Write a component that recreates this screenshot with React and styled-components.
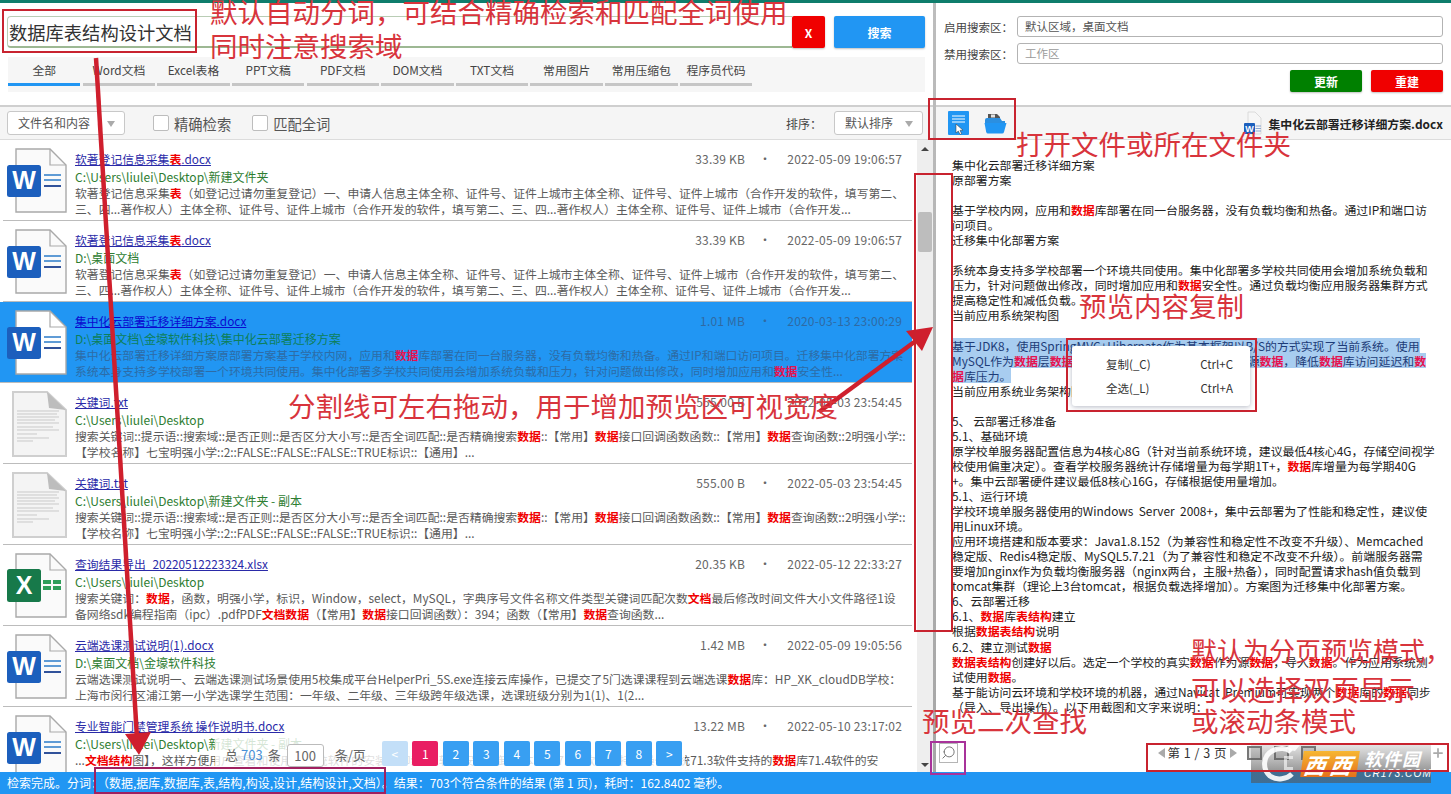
import React from 'react';
import styled, { createGlobalStyle } from 'styled-components';
import { Search, Plus } from 'lucide-react';

const UI = '"Noto Sans CJK SC", "Noto Sans", sans-serif';

const Global = createGlobalStyle`
  html, body { margin: 0; padding: 0; height: 100%; overflow: hidden; background: #fff; }
  body { font-family: ${UI}; font-size: 12px; color: #333; }
  * { box-sizing: border-box; }
`;

const Page = styled.div`
  position: relative;
  display: flex;
  flex-direction: column;
  width: 1451px;
  height: 794px;
  overflow: hidden;
`;
const TopBar = styled.div`height: 3px; background: #0f7d6c; flex: none;`;
const Main = styled.div`flex: 1; display: flex; min-height: 0;`;
const LeftPane = styled.section`width: 933px; flex: none; display: flex; flex-direction: column; min-height: 0;`;
const Divider = styled.div`width: 3px; flex: none; background: linear-gradient(#bdbdbd, #a6a6a6);`;
const RightPane = styled.section`flex: 1; display: flex; flex-direction: column; min-width: 0; min-height: 0;`;

const Header = styled.header`height: 102px; flex: none; padding: 13px 8px 0 7px;`;
const SearchRow = styled.div`display: flex; height: 32px;`;
const SearchField = styled.div`
  width: 785px;
  height: 32px;
  border: 1px solid #b9cdb5;
  border-bottom: 2px solid #9db893;
  border-right: none;
  border-radius: 4px 0 0 4px;
  font-size: 18.3px;
  line-height: 30px;
  padding-left: 1px;
  color: #333;
  white-space: nowrap;
`;
const ActionButton = styled.button`
  border: none;
  height: 32px;
  border-radius: 2px;
  color: #fff;
  font: 700 12px ${UI};
  padding: 0;
  box-shadow: 0 1px 2px rgba(0,0,0,.25);
  background: ${p => p.$bg};
  width: ${p => p.$w}px;
  margin-left: ${p => p.$ml}px;
`;
const Tabs = styled.nav`
  margin: 9px 0 0 1px;
  width: 917px;
  height: 35px;
  background: #f6f6f6;
  display: grid;
  grid-template-columns: repeat(10, 72.4px);
  column-gap: 2.25px;
`;
const Tab = styled.div`
  height: 29px;
  padding-top: 4px;
  text-align: center;
  font-size: 11.8px;
  line-height: 18px;
  color: #444;
  white-space: nowrap;
  border-bottom: 3px solid ${p => (p.$active ? '#2196f3' : '#c6c6c6')};
`;

const Toolbar = styled.div`
  height: 35px;
  flex: none;
  background: #f5f5f5;
  border-top: 2px solid #cfcfcf;
  border-bottom: 1px solid #dcdcdc;
  display: flex;
  align-items: center;
`;
const LeftToolbar = styled(Toolbar)`padding: 0 10px 0 7px;`;
const Picker = styled.div`
  position: relative;
  height: 24px;
  width: ${p => p.$w}px;
  background: #fff;
  border: 1px solid #c8c8c8;
  border-radius: 3px;
  padding-left: ${p => p.$pad}px;
  font-size: 12px;
  line-height: 22px;
  color: #555;
  &::after {
    content: '';
    position: absolute;
    right: 9px;
    top: 9px;
    border: 4px solid transparent;
    border-top: 6px solid #aaa;
    border-bottom: none;
  }
`;
const Check = styled.label`
  display: flex;
  align-items: center;
  gap: 5px;
  font-size: 14.3px;
  color: #555;
  margin-left: ${p => p.$ml}px;
`;
const CheckBox = styled.span`
  width: 16px;
  height: 16px;
  background: #fff;
  border: 1px solid #bdbdbd;
  border-radius: 2px;
`;
const SortLabel = styled.span`margin-left: auto; font-size: 12px; color: #444; margin-right: 12px;`;

const ListWrap = styled.div`flex: 1; position: relative; min-height: 0; display: flex; overflow: hidden;`;
const List = styled.div`width: 917px; flex: none; padding-right: 2px;`;
const Row = styled.article`
  height: 81px;
  display: flex;
  padding: 8px 10px 0 ${p => (p.$selected ? 7 : 4)}px;
  background: ${p => (p.$selected ? '#2196f3' : 'transparent')};
  border-bottom: 1px solid #bcbcbc;
  margin-left: ${p => (p.$selected ? 0 : 3)}px;
  margin-right: 3px;
`;
const FileIcon = styled.svg`width: 60px; height: 66px; flex: none; display: block;`;
const RowBody = styled.div`margin-left: 8px; padding-top: 2px; flex: 1; min-width: 0;`;
const RowHead = styled.div`display: flex; justify-content: space-between; height: 18px; line-height: 18px;`;
const RowTitle = styled.a`
  font-size: 11.8px;
  color: ${p => (p.$selected ? '#0a0ad0' : '#2a2aa8')};
  text-decoration: underline;
  white-space: nowrap;
`;
const Meta = styled.div`
  display: flex;
  gap: 14px;
  font-size: 12px;
  letter-spacing: .2px;
  color: ${p => (p.$selected ? '#2f6aa3' : '#666')};
  white-space: nowrap;
`;
const MetaDot = styled.span`margin-right: 2px;`;
const RowPath = styled.div`
  height: 17px;
  line-height: 17px;
  font-size: 12px;
  white-space: nowrap;
  color: ${p => (p.$selected ? '#0d7f5a' : '#2e7d32')};
`;
const Snippet = styled.div`
  height: 16px;
  line-height: 16px;
  font-size: 11.85px;
  white-space: nowrap;
  color: ${p => (p.$selected ? '#2d6ca6' : '#5a5a5a')};
`;
const Hl = styled.b`color: ${p => (p.$pink ? '#e6124f' : '#f00000')}; font-weight: 700;`;

const ScrollTrack = styled.div`
  position: relative;
  width: 16px;
  flex: none;
  background: #eeeeee;
`;
const ScrollThumb = styled.div`
  position: absolute;
  left: 1px;
  top: 72px;
  width: 14px;
  height: 40px;
  background: #bdbdbd;
  border-radius: 2px;
`;
const ScrollArrow = styled.i`
  position: absolute;
  left: 4px;
  border: 4px solid transparent;
  ${p => (p.$down
    ? 'bottom: 5px; border-top: 4px solid #444; border-bottom: none;'
    : 'top: 7px; border-bottom: 4px solid #444; border-top: none;')}
`;

const PagerOverlay = styled.div`
  position: absolute;
  left: 215px;
  bottom: 0;
  width: 470px;
  height: 36px;
  padding: 5px 0 5px 10px;
  background: rgba(255,255,255,.8);
  display: flex;
  align-items: flex-start;
  font-size: 13px;
  color: #666;
`;
const PagerText = styled.span`
  line-height: 24px;
  margin: 2px ${p => p.$mr || 0}px 0 0;
  white-space: nowrap;
  flex: none;
`;
const PagerTotal = styled.span`color: #4a8fd6; margin: 0 5px 0 3px;`;
const PageSize = styled.span`
  flex: none;
  width: 37px;
  height: 23px;
  margin: 3px 11px 0 6px;
  border: 1px solid #bbb;
  border-radius: 3px;
  background: #fff;
  text-align: center;
  line-height: 21px;
  font-size: 13px;
`;
const PageBtn = styled.span`
  width: 26px;
  height: 25px;
  margin-right: 4.5px;
  border-radius: 2px;
  color: #fff;
  background: ${p => (p.$current ? '#e91e63' : p.$disabled ? '#c3dff8' : '#389ff2')};
  text-align: center;
  line-height: 25px;
  font-size: 12px;
  flex: none;
`;

const SideHeader = styled.header`height: 102px; flex: none; padding: 13px 8px 0 8px;`;
const FieldRow = styled.div`display: flex; align-items: center; height: 21px; margin-bottom: 6px;`;
const FieldLabel = styled.span`width: 73px; font-size: 11.5px; color: #444; white-space: nowrap;`;
const FieldBox = styled.div`
  flex: 1;
  height: 21px;
  border: 1px solid #b3b3b3;
  border-radius: 3px;
  padding-left: 7px;
  font-size: 11.5px;
  line-height: 19px;
  color: ${p => (p.$placeholder ? '#9a9a9a' : '#555')};
`;
const SideActions = styled.div`display: flex; justify-content: flex-end; gap: 9px; margin-top: 4px;`;
const SideButton = styled(ActionButton)`height: 22px; width: 72px; margin-left: 0;`;

const SideToolbar = styled(Toolbar)`padding: 0 8px 0 12px;`;
const ToolIcon = styled.svg`display: block; flex: none; margin-right: ${p => p.$mr || 0}px;`;
const FileName = styled.span`
  margin-left: 6px;
  font-size: 11.9px;
  font-weight: 700;
  color: #222;
  white-space: nowrap;
`;
const Spacer = styled.span`margin-left: auto;`;

const Preview = styled.div`
  flex: 1;
  min-height: 0;
  padding: 17px 0 0 16px;
  overflow: hidden;
  font-size: 11.9px;
  line-height: 15.06px;
  color: #222;
`;
const PreviewLine = styled.div`
  height: 15.06px;
  white-space: pre;
  width: fit-content;
  background: ${p => (p.$sel ? '#a8cdf0' : 'transparent')};
  color: ${p => (p.$sel ? '#1d3c78' : '#222')};
`;
const PreviewFoot = styled.div`
  height: 32px;
  flex: none;
  display: flex;
  align-items: center;
  padding: 0 6px 0 3px;
  font-size: 12px;
  color: #444;
`;
const FindButton = styled.span`
  width: 19px;
  height: 20px;
  border: 1px solid #b5b5b5;
  display: flex;
  align-items: center;
  justify-content: center;
  color: #777;
  margin-top: -7px;
  & > svg { transform: scaleX(-1); }
`;
const PageNav = styled.div`
  margin-left: auto;
  display: flex;
  align-items: center;
  margin-top: -7px;
  color: #aaa;
`;
const PageLabel = styled.span`
  color: #333;
  font-size: 12.5px;
  letter-spacing: .5px;
  white-space: nowrap;
  margin: 0 3px;
`;
const PageTri = styled.i`
  width: 0;
  height: 0;
  border-top: 5.5px solid transparent;
  border-bottom: 5.5px solid transparent;
  ${p => (p.$right ? 'border-left: 7px solid #aaa;' : 'border-right: 7px solid #aaa;')}
`;
const ViewIcon = styled.span`
  width: 15px;
  height: 14px;
  margin-left: ${p => p.$ml}px;
  border: 2px solid #777;
  background: #ddd;
`;
const ZoomIn = styled.span`margin-left: 115px; display: flex;`;

const StatusBar = styled.footer`
  height: 22px;
  flex: none;
  background: #2196f3;
  color: #fff;
  font-size: 12px;
  line-height: 21px;
  padding-left: 7px;
  white-space: pre;
`;

const ContextMenu = styled.div`
  position: absolute;
  left: 1072px;
  top: 346px;
  width: 178px;
  height: 60px;
  padding: 6px 0;
  background: #fff;
  border-radius: 3px;
  box-shadow: 0 1px 5px rgba(70,80,110,.4);
`;
const MenuItem = styled.div`
  display: flex;
  height: 24px;
  line-height: 24px;
  padding-left: 34px;
  font-size: 11.5px;
  color: #333;
`;
const MenuShortcut = styled.span`margin-left: auto; margin-right: 17px;`;

const Note = styled.div`
  position: absolute;
  left: ${p => p.$x}px;
  top: ${p => p.$y}px;
  font-size: ${p => p.$size || 27.5}px;
  line-height: 28px;
  color: #d8343c;
  white-space: nowrap;
`;
const Frame = styled.div`
  position: absolute;
  left: ${p => p.$x}px;
  top: ${p => p.$y}px;
  width: ${p => p.$w}px;
  height: ${p => p.$h}px;
  border: 2px solid ${p => p.$c || '#c8232f'};
`;
const ArrowLayer = styled.svg`position: absolute; left: 0; top: 0; pointer-events: none;`;

const Watermark = styled.div`
  position: absolute;
  left: 1251px;
  top: 745px;
  width: 180px;
  height: 38px;
  background: linear-gradient(rgba(120,120,120,.2), rgba(85,85,85,.62) 70%);
  display: flex;
  align-items: center;
  padding-left: 6px;
`;
const WaterMarkLogo = styled.svg`width: 44px; height: 38px; flex: none;`;
const WaterBrand = styled.span`
  background: linear-gradient(#f7b733, #e5711a);
  color: #fff;
  font: italic 700 22px ${UI};
  line-height: 26px;
  padding: 0 2px;
  letter-spacing: 4px;
  transform: skewX(-8deg);
  margin-left: 1px;
  white-space: nowrap;
`;
const WaterText = styled.div`
  margin-left: 6px;
  color: #fff;
  font: italic 700 18px/19px ${UI};
  letter-spacing: 1px;
  white-space: nowrap;
`;
const WaterSub = styled.div`font: italic 400 10px/11px "Liberation Sans", sans-serif; letter-spacing: 1.2px;`;

/* ---- data ---- */
const marked = (s, pink) => s.split(/(\[[^\]]+\])/).map((part, i) =>
  part.startsWith('[') ? <Hl key={i} $pink={pink}>{part.slice(1, -1)}</Hl> : part);

const rows = [
  { kind: 'word', title: '软著登记信息采集[表].docx', path: 'C:\\Users\\liulei\\Desktop\\新建文件夹', size: '33.39 KB', date: '2022-05-09 19:06:57',
    a: '软著登记信息采集[表]（如登记过请勿重复登记）一、申请人信息主体全称、证件号、证件上城市主体全称、证件号、证件上城市（合作开发的软件，填写第二、',
    b: '三、四...著作权人）主体全称、证件号、证件上城市（合作开发的软件，填写第二、三、四...著作权人）主体全称、证件号、证件上城市（合作开发...' },
  { kind: 'word', title: '软著登记信息采集[表].docx', path: 'D:\\桌面文档', size: '33.39 KB', date: '2022-05-09 19:06:57',
    a: '软著登记信息采集[表]（如登记过请勿重复登记）一、申请人信息主体全称、证件号、证件上城市主体全称、证件号、证件上城市（合作开发的软件，填写第二、',
    b: '三、四...著作权人）主体全称、证件号、证件上城市（合作开发的软件，填写第二、三、四...著作权人）主体全称、证件号、证件上城市（合作开发...' },
  { kind: 'word', selected: true, title: '集中化云部署迁移详细方案.docx', path: 'D:\\桌面文档\\金壕软件科技\\集中化云部署迁移方案', size: '1.01 MB', date: '2020-03-13 23:00:29',
    a: '集中化云部署迁移详细方案原部署方案基于学校内网，应用和[数据]库部署在同一台服务器，没有负载均衡和热备。通过IP和端口访问项目。迁移集中化部署方案',
    b: '系统本身支持多学校部署一个环境共同使用。集中化部署多学校共同使用会增加系统负载和压力，针对问题做出修改，同时增加应用和[数据]安全性...' },
  { kind: 'txt', title: '关键词.txt', path: 'C:\\Users\\liulei\\Desktop', size: '555.00 B', date: '2022-05-03 23:54:45',
    a: '搜索关键词::提示语::搜索域::是否正则::是否区分大小写::是否全词匹配::是否精确搜索[数据]::【常用】[数据]接口回调函数函数::【常用】[数据]查询函数::2明强小学::',
    b: '【学校名称】七宝明强小学::2::FALSE::FALSE::FALSE::TRUE标识::【通用】...' },
  { kind: 'txt', title: '关键词.txt', path: 'C:\\Users\\liulei\\Desktop\\新建文件夹 - 副本', size: '555.00 B', date: '2022-05-03 23:54:45',
    a: '搜索关键词::提示语::搜索域::是否正则::是否区分大小写::是否全词匹配::是否精确搜索[数据]::【常用】[数据]接口回调函数函数::【常用】[数据]查询函数::2明强小学::',
    b: '【学校名称】七宝明强小学::2::FALSE::FALSE::FALSE::TRUE标识::【通用】...' },
  { kind: 'excel', title: '查询结果导出_20220512223324.xlsx', path: 'C:\\Users\\liulei\\Desktop', size: '20.35 KB', date: '2022-05-12 22:33:27',
    a: '搜索关键词：[数据]，函数，明强小学，标识，Window，select，MySQL，字典序号文件名称文件类型关键词匹配次数[文档]最后修改时间文件大小文件路径1设',
    b: '备网络sdk编程指南（ipc）.pdfPDF[文档数据]（【常用】[数据]接口回调函数）：394；函数（【常用】[数据]查询函数...' },
  { kind: 'word', title: '云端选课测试说明(1).docx', path: 'D:\\桌面文档\\金壕软件科技', size: '1.42 MB', date: '2022-05-09 19:05:56',
    a: '云端选课测试说明一、云端选课测试场景使用5校集成平台HelperPri_5S.exe连接云库操作，已提交了5门选课课程到云端选课[数据]库：HP_XK_cloudDB学校：',
    b: '上海市闵行区浦江第一小学选课学生范围：一年级、二年级、三年级跨年级选课，选课班级分别为1(1)、1(2...' },
  { kind: 'word', title: '专业智能门禁管理系统 操作说明书.docx', path: 'C:\\Users\\liulei\\Desktop\\新建文件夹 - 副本', size: '13.22 MB', date: '2022-05-10 23:17:02',
    a: '...[文档结构]图】，这样方便用户查看和使用本系统软件的安装和卸载7.1软件安装和卸载本软件7.1.2软件支持的操作系统71.3软件支持的[数据]库71.4软件的安',
    b: '' },
];

const previewLines = [
  '集中化云部署迁移详细方案', '原部署方案', '',
  '基于学校内网，应用和[数据]库部署在同一台服务器，没有负载均衡和热备。通过IP和端口访', '问项目。', '迁移集中化部署方案', '',
  '系统本身支持多学校部署一个环境共同使用。集中化部署多学校共同使用会增加系统负载和',
  '压力，针对问题做出修改，同时增加应用和[数据]安全性。通过负载均衡应用服务器集群方式', '提高稳定性和减低负载。', '当前应用系统架构图', '',
  '#基于JDK8，使用SpringMVC+Hibernate作为基本框架以B/S的方式实现了当前系统。使用',
  '#MySQL作为[数据]层[数据]库，使用Memcached缓存热点资源[数据]，降低[数据]库访问延迟和[数',
  '#据]库压力。', '当前应用系统业务架构图', '',
  '5、 云部署迁移准备', '5.1、基础环境',
  '原学校单服务器配置信息为4核心8G（针对当前系统环境，建议最低4核心4G，存储空间视学',
  '校使用偏重决定）。查看学校服务器统计存储增量为每学期1T+，[数据]库增量为每学期40G',
  '+。集中云部署硬件建议最低8核心16G，存储根据使用量增加。', '5.1、运行环境',
  '学校环境单服务器使用的Windows  Server  2008+，集中云部署为了性能和稳定性，建议使', '用Linux环境。',
  '应用环境搭建和版本要求：Java1.8.152（为兼容性和稳定性不改变不升级）、Memcached',
  '稳定版、Redis4稳定版、MySQL5.7.21（为了兼容性和稳定不改变不升级）。前端服务器需',
  '要增加nginx作为负载均衡服务器（nginx两台，主服+热备），同时配置请求hash值负载到',
  'tomcat集群（理论上3台tomcat，根据负载选择增加）。方案图为迁移集中化部署方案。',
  '6、云部署迁移', '6.1、[数据]库[表结构]建立', '根据[数据表结构]说明', '6.2、建立测试[数据]',
  '[数据表结构]创建好以后。选定一个学校的真实[数据]作为源[数据]，导入[数据]。作为应用系统测',
  '试使用[数据]。',
  '基于能访问云环境和学校环境的机器，通过Navicat  Premium可实现两个[数据]库的[数据]同步',
  '（导入、导出操作）。以下用截图和文字来说明：',
];

const tabs = ['全部', 'Word文档', 'Excel表格', 'PPT文稿', 'PDF文档', 'DOM文档', 'TXT文档', '常用图片', '常用压缩包', '程序员代码'];

/* ---- drawings ---- */
const PageShape = ({ selected }) => (
  <>
    <path d="M9 1H43L59 17V64H9Z" fill={selected ? '#fff' : '#fafafa'} stroke="#a9a9a9" strokeWidth="1.4" />
    <path d="M43 1V17H59" fill="none" stroke="#a9a9a9" strokeWidth="1.2" />
  </>
);
const WordGlyph = ({ selected }) => (
  <FileIcon viewBox="0 0 60 66">
    <PageShape selected={selected} />
    <path d="M37 27H54M37 32H54" stroke="#2c7cc9" strokeWidth="1.6" />
    <path d="M37 38H54" stroke="#1a3f8f" strokeWidth="1.8" />
    <rect x="0" y="17" width="34" height="32" rx="2.5" fill="#1c5fbd" />
    <text x="17" y="41" textAnchor="middle" fontFamily="Liberation Sans, sans-serif" fontWeight="700" fontSize="25" fill="#fff">W</text>
  </FileIcon>
);
const ExcelGlyph = () => (
  <FileIcon viewBox="0 0 60 66">
    <PageShape />
    <path d="M36 27H44V31H36ZM46 27H54V31H46ZM36 33H44V37H36ZM46 33H54V37H46Z" fill="#2f9e5b" />
    <rect x="0" y="16" width="34" height="33" rx="2.5" fill="#17794a" />
    <text x="17" y="41" textAnchor="middle" fontFamily="Liberation Sans, sans-serif" fontWeight="700" fontSize="25" fill="#fff">X</text>
  </FileIcon>
);
const TxtGlyph = () => (
  <FileIcon viewBox="0 0 60 66">
    <path d="M6 1H40L59 19V65H6Z" fill="#f4f4f4" stroke="#cfcfcf" strokeWidth="2" />
    <path d="M40 1L42 17L59 19Z" fill="#bdbdbd" />
    <path d="M10 20H52M10 23H50M10 26H52M10 29H48M10 32H52M10 36H46M10 39H52M10 43H30M10 47H42M10 50H26"
      stroke="#c9c9c9" strokeWidth="1" fill="none" />
  </FileIcon>
);
const icons = { word: WordGlyph, excel: ExcelGlyph, txt: TxtGlyph };

const OpenDocIcon = () => (
  <ToolIcon width="22" height="24" viewBox="0 0 22 24" $mr={14}>
    <rect width="21" height="24" rx="1" fill="#2196f3" />
    <path d="M4 5H17M4 8H17M4 11H17" stroke="#fff" strokeWidth="1" />
    <path d="M8 13L8 22L10.3 20L12 23.5L13.6 22.7L12 19.4L15 19.2Z" fill="#fff" stroke="#333" strokeWidth=".5" />
  </ToolIcon>
);
const FolderIcon = () => (
  <ToolIcon width="23" height="21" viewBox="0 0 23 21">
    <path d="M4 8V1H13L16 4V8Z" fill="#555" />
    <path d="M7 1.5H11V4.5H7Z" fill="#e2e2e2" />
    <path d="M1 7Q1 5 3 5H16L18 8H21V10H1Z" fill="#2b8fe0" />
    <path d="M0.5 10H22.5L20 19Q19.7 20.5 18 20.5H4Q2.6 20.5 2.2 19Z" fill="#2196f3" />
  </ToolIcon>
);
const SmallWordIcon = () => (
  <ToolIcon width="18" height="24" viewBox="0 0 18 24">
    <path d="M4 1H11L17 7V23H4Z" fill="#f6f6f6" stroke="#d4d4d4" strokeWidth=".8" />
    <path d="M11.5 15H17M11.5 17.5H17M11.5 20H17" stroke="#7f9fd0" strokeWidth=".9" />
    <rect x="0" y="12" width="11" height="11" rx="1" fill="#1c5fbd" />
    <text x="5.5" y="20.8" textAnchor="middle" fontFamily="Liberation Sans, sans-serif" fontWeight="700" fontSize="9" fill="#fff">W</text>
  </ToolIcon>
);
const Arrows = () => (
  <ArrowLayer width="1451" height="794" viewBox="0 0 1451 794">
    <path d="M96 58L137 738" stroke="#cf1f2d" strokeWidth="4.5" fill="none" />
    <path d="M125 734L151 732L139 755Z" fill="#cf1f2d" />
    <path d="M819 412L917 340" stroke="#cf1f2d" strokeWidth="4.5" fill="none" />
    <path d="M906 331L933 327L922 351Z" fill="#cf1f2d" />
  </ArrowLayer>
);
const WatermarkC = () => (
  <WaterMarkLogo viewBox="0 0 44 38">
    <path d="M34 7C30 3 22 2 15 6C6 11 5 24 13 31C20 36 30 34 35 29" fill="none" stroke="#fff" strokeWidth="5" opacity=".9" />
    <path d="M28 4L32 0H43L38 6Z" fill="#fff" opacity=".85" />
    <path d="M27 11H36V14H30V22H36V25H27Z" fill="#fff" opacity=".6" />
  </WaterMarkLogo>
);

export default function App() {
  return (
    <Page>
      <Global />
      <TopBar />
      <Main>
        <LeftPane>
          <Header>
            <SearchRow>
              <SearchField>数据库表结构设计文档</SearchField>
              <ActionButton $bg="#f00000" $w={33} $ml={0}>X</ActionButton>
              <ActionButton $bg="#2196f3" $w={91} $ml={9}>搜索</ActionButton>
            </SearchRow>
            <Tabs>
              {tabs.map((t, i) => <Tab key={t} $active={i === 0}>{t}</Tab>)}
            </Tabs>
          </Header>
          <LeftToolbar>
            <Picker $w={118} $pad={10}>文件名和内容</Picker>
            <Check $ml={28}><CheckBox />精确检索</Check>
            <Check $ml={21}><CheckBox />匹配全词</Check>
            <SortLabel>排序：</SortLabel>
            <Picker $w={89} $pad={10}>默认排序</Picker>
          </LeftToolbar>
          <ListWrap>
            <List>
              {rows.map((r, i) => {
                const Icon = icons[r.kind];
                return (
                  <Row key={i} $selected={r.selected}>
                    <Icon selected={r.selected} />
                    <RowBody>
                      <RowHead>
                        <RowTitle $selected={r.selected}>{marked(r.title)}</RowTitle>
                        <Meta $selected={r.selected}><span>{r.size}</span><MetaDot>•</MetaDot><span>{r.date}</span></Meta>
                      </RowHead>
                      <RowPath $selected={r.selected}>{r.path}</RowPath>
                      <Snippet $selected={r.selected}>{marked(r.a, r.selected)}</Snippet>
                      <Snippet $selected={r.selected}>{marked(r.b, r.selected)}</Snippet>
                    </RowBody>
                  </Row>
                );
              })}
            </List>
            <ScrollTrack>
              <ScrollArrow />
              <ScrollThumb />
              <ScrollArrow $down />
            </ScrollTrack>
            <PagerOverlay>
              <PagerText>总</PagerText>
              <PagerText><PagerTotal>703</PagerTotal></PagerText>
              <PagerText>条</PagerText>
              <PageSize>100</PageSize>
              <PagerText $mr={16}>条/页</PagerText>
              <PageBtn $disabled>&lt;</PageBtn>
              <PageBtn $current>1</PageBtn>
              {[2, 3, 4, 5, 6, 7, 8].map(n => <PageBtn key={n}>{n}</PageBtn>)}
              <PageBtn>&gt;</PageBtn>
            </PagerOverlay>
          </ListWrap>
        </LeftPane>
        <Divider />
        <RightPane>
          <SideHeader>
            <FieldRow><FieldLabel>启用搜索区：</FieldLabel><FieldBox>默认区域，桌面文档</FieldBox></FieldRow>
            <FieldRow><FieldLabel>禁用搜索区：</FieldLabel><FieldBox $placeholder>工作区</FieldBox></FieldRow>
            <SideActions>
              <SideButton $bg="#008000">更新</SideButton>
              <SideButton $bg="#f00000">重建</SideButton>
            </SideActions>
          </SideHeader>
          <SideToolbar>
            <OpenDocIcon />
            <FolderIcon />
            <Spacer />
            <SmallWordIcon />
            <FileName>集中化云部署迁移详细方案.docx</FileName>
          </SideToolbar>
          <Preview>
            {previewLines.map((l, i) => {
              const sel = l.startsWith('#');
              const text = sel ? l.slice(1) : l;
              if (text === '据]库压力。') return <PreviewLine key={i} $sel><Hl $pink>据</Hl>库压力。</PreviewLine>;
              if (text.endsWith('[数')) return <PreviewLine key={i} $sel>{marked(text.slice(0, -2), true)}<Hl $pink>数</Hl></PreviewLine>;
              return <PreviewLine key={i} $sel={sel}>{marked(text, sel)}</PreviewLine>;
            })}
          </Preview>
          <PreviewFoot>
            <FindButton><Search size={15} strokeWidth={1.6} /></FindButton>
            <PageNav>
              <PageTri />
              <PageLabel>第 1 / 3 页</PageLabel>
              <PageTri $right />
              <ViewIcon $ml={10} />
              <ViewIcon $ml={12} />
              <ViewIcon $ml={12} />
              <ZoomIn><Plus size={14} strokeWidth={3} /></ZoomIn>
            </PageNav>
          </PreviewFoot>
        </RightPane>
      </Main>
      <StatusBar>检索完成。分词：（数据,据库,数据库,表,结构,构设,设计,结构设计,文档）。结果：703个符合条件的结果 (第 1 页)，耗时：162.8402 毫秒。</StatusBar>

      <ContextMenu>
        <MenuItem>复制(_C)<MenuShortcut>Ctrl+C</MenuShortcut></MenuItem>
        <MenuItem>全选(_L)<MenuShortcut>Ctrl+A</MenuShortcut></MenuItem>
      </ContextMenu>

      <Watermark>
        <WatermarkC />
        <WaterBrand>西西</WaterBrand>
        <WaterText>软件园<WaterSub>CR173.COM</WaterSub></WaterText>
      </Watermark>

      <Arrows />
      <Frame $x={2} $y={9} $w={195} $h={44} />
      <Frame $x={928} $y={98} $w={88} $h={42} />
      <Frame $x={914} $y={173} $w={39} $h={459} />
      <Frame $x={1066} $y={338} $w={191} $h={74} />
      <Frame $x={930} $y={741} $w={36} $h={34} $c="#a8329a" />
      <Frame $x={1146} $y={743} $w={303} $h={29} />
      <Frame $x={94} $y={767} $w={292} $h={27} $c="#a02060" />

      <Note $x={210} $y={-3}>默认自动分词，可结合精确检索和匹配全词使用</Note>
      <Note $x={210} $y={31}>同时注意搜索域</Note>
      <Note $x={1016} $y={129}>打开文件或所在文件夹</Note>
      <Note $x={1079} $y={291}>预览内容复制</Note>
      <Note $x={288} $y={391}>分割线可左右拖动，用于增加预览区可视宽度</Note>
      <Note $x={922} $y={706}>预览二次查找</Note>
      <Note $x={1191} $y={636} $size={26}>默认为分页预览模式，</Note>
      <Note $x={1191} $y={675} $size={28}>可以选择双页显示</Note>
      <Note $x={1191} $y={706}>或滚动条模式</Note>
    </Page>
  );
}
